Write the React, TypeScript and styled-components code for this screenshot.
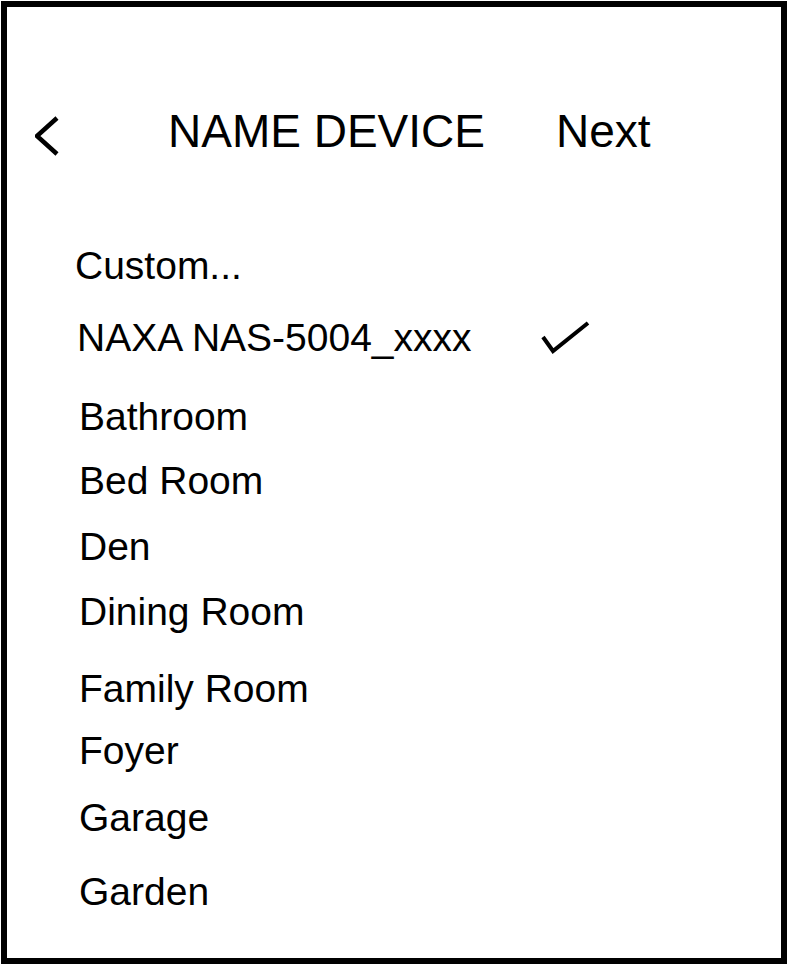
import React from "react";
import styled, { createGlobalStyle } from "styled-components";

const GlobalStyle = createGlobalStyle`
  html, body {
    margin: 0;
    padding: 0;
    background: #ffffff;
  }
  body {
    font-family: "Liberation Sans", Arial, sans-serif;
    color: #000000;
  }
`;

const Frame = styled.div`
  box-sizing: border-box;
  margin: 1px 0 0 1px;
  width: 786px;
  height: 963px;
  border: 6px solid #000000;
  background: #ffffff;
  display: flex;
  flex-direction: column;
  overflow: hidden;
`;

const Header = styled.header`
  display: flex;
  align-items: flex-start;
  height: 46px;
  margin-top: 101px;
  padding-left: 28px;
`;

const BackButton = styled.button`
  display: block;
  margin: 8px 0 0 0;
  padding: 0;
  border: none;
  background: none;
  width: 24px;
  height: 40px;
  cursor: pointer;
`;

const Title = styled.h1`
  margin: 0 0 0 109px;
  font-size: 46px;
  line-height: 46px;
  font-weight: 400;
  white-space: nowrap;
`;

const NextLink = styled.span`
  margin-left: 71px;
  font-size: 46px;
  line-height: 46px;
  white-space: nowrap;
`;

const List = styled.ul`
  list-style: none;
  margin: 93px 0 0 0;
  padding: 0;
  display: flex;
  flex-direction: column;
`;

const Row = styled.li<{ $indent: number; $space: number }>`
  display: grid;
  grid-template-columns: ${(p) => 534 - p.$indent}px auto;
  align-items: start;
  height: 38px;
  margin-top: ${(p) => p.$space}px;
  padding-left: ${(p) => p.$indent}px;
  font-size: 39px;
  line-height: 38px;
  white-space: nowrap;
`;

const Check = styled.svg`
  display: block;
  margin-top: 2px;
`;

const items: { label: string; indent: number; space: number; checked?: boolean }[] = [
  { label: "Custom...", indent: 68, space: 0 },
  { label: "NAXA NAS-5004_xxxx", indent: 70, space: 34, checked: true },
  { label: "Bathroom", indent: 72, space: 41 },
  { label: "Bed Room", indent: 72, space: 26 },
  { label: "Den", indent: 72, space: 28 },
  { label: "Dining Room", indent: 72, space: 27 },
  { label: "Family Room", indent: 72, space: 39 },
  { label: "Foyer", indent: 72, space: 24 },
  { label: "Garage", indent: 72, space: 29 },
  { label: "Garden", indent: 72, space: 36 },
];

export default function App() {
  return (
    <>
      <GlobalStyle />
      <Frame>
        <Header>
          <BackButton aria-label="Back">
            <svg width="24" height="40" viewBox="0 0 24 40">
              <polyline
                points="22,2 2,20 22,38"
                fill="none"
                stroke="#000"
                strokeWidth="4.5"
                strokeLinejoin="miter"
              />
            </svg>
          </BackButton>
          <Title>NAME DEVICE</Title>
          <NextLink>Next</NextLink>
        </Header>
        <List>
          {items.map((it) => (
            <Row key={it.label} $indent={it.indent} $space={it.space}>
              <span>{it.label}</span>
              {it.checked ? (
                <Check width="50" height="34" viewBox="0 0 50 34">
                  <polyline
                    points="2,16 12,30 47,2"
                    fill="none"
                    stroke="#000"
                    strokeWidth="4"
                    strokeLinejoin="miter"
                  />
                </Check>
              ) : null}
            </Row>
          ))}
        </List>
      </Frame>
    </>
  );
}
